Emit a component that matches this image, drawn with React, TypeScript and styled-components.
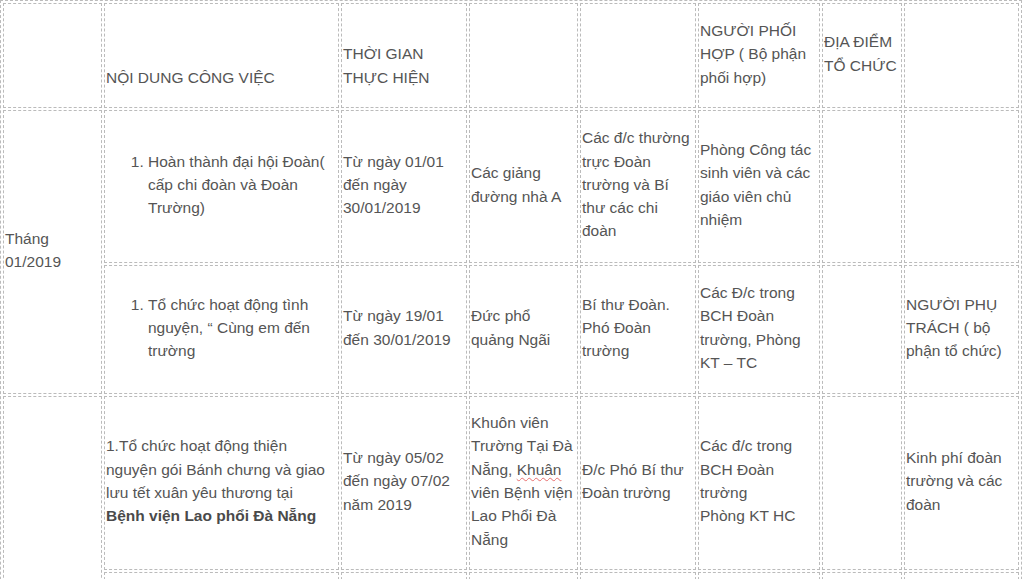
import React from "react";
import styled, { createGlobalStyle } from "styled-components";

const GlobalStyle = createGlobalStyle`
  body {
    margin: 0;
    background: #ffffff;
    font-family: "Liberation Sans", Arial, sans-serif;
    font-size: 15.5px;
    line-height: 23.3px;
    color: #555555;
  }
`;

const Table = styled.table`
  width: 1022px;
  table-layout: fixed;
  border-collapse: separate;
  border-spacing: 2px;
  border: 1px dashed #bbbbbb;
`;

const Row = styled.tr<{ h: number }>`
  height: ${({ h }) => h}px;
`;

const Cell = styled.td<{ valign?: "middle" | "bottom" }>`
  border: 1px dashed #bbbbbb;
  padding: 0 1px;
  vertical-align: ${({ valign }) => valign || "middle"};
  padding-bottom: ${({ valign }) => (valign === "bottom" ? "18px" : "4px")};
  word-wrap: break-word;
`;

const NumberedList = styled.ol`
  margin: 0;
  padding-left: 42px;
`;

const Strong = styled.strong`
  font-weight: 700;
  color: #4a4a4a;
`;

const Misspelled = styled.span`
  text-decoration: underline wavy #e8706f;
  text-decoration-thickness: 1px;
  text-underline-offset: 2px;
`;

const widths = [99, 235, 126, 109, 116, 122, 80, 115];

const App: React.FC = () => {
  return (
    <>
      <GlobalStyle />
      <Table>
        <colgroup>
          {widths.map((w, i) => (
            <col key={i} style={{ width: w }} />
          ))}
        </colgroup>
        <tbody>
          <Row h={105}>
            <Cell />
            <Cell valign="bottom">NỘI DUNG CÔNG VIỆC</Cell>
            <Cell valign="bottom">
              THỜI GIAN
              <br />
              THỰC HIỆN
            </Cell>
            <Cell />
            <Cell />
            <Cell valign="bottom">NGƯỜI PHỐI HỢP ( Bộ phận phối hợp)</Cell>
            <Cell>ĐỊA ĐIỂM TỔ CHỨC</Cell>
            <Cell />
          </Row>

          <Row h={153}>
            <Cell rowSpan={2}>Tháng 01/2019</Cell>
            <Cell>
              <NumberedList>
                <li>Hoàn thành đại hội Đoàn( cấp chi đoàn và Đoàn Trường)</li>
              </NumberedList>
            </Cell>
            <Cell>Từ ngày 01/01 đến ngày 30/01/2019</Cell>
            <Cell>Các giảng đường nhà A</Cell>
            <Cell>Các đ/c thường trực Đoàn trường và Bí thư các chi đoàn</Cell>
            <Cell>Phòng Công tác sinh viên và các giáo viên chủ nhiệm</Cell>
            <Cell />
            <Cell />
          </Row>

          <Row h={129}>
            <Cell>
              <NumberedList>
                <li>Tổ chức hoạt động tình nguyện, “ Cùng em đến trường</li>
              </NumberedList>
            </Cell>
            <Cell>Từ ngày 19/01 đến 30/01/2019</Cell>
            <Cell>Đức phổ quảng Ngãi</Cell>
            <Cell>Bí thư Đoàn. Phó Đoàn trường</Cell>
            <Cell>Các Đ/c trong BCH Đoàn trường, Phòng KT – TC</Cell>
            <Cell />
            <Cell>NGƯỜI PHỤ TRÁCH ( bộ phận tổ chức)</Cell>
          </Row>

          <Row h={174}>
            <Cell rowSpan={2} />
            <Cell>
              1.Tổ chức hoạt động thiện nguyện gói Bánh chưng và giao lưu tết
              xuân yêu thương tại
              <br />
              <Strong>Bệnh viện Lao phổi Đà Nẵng</Strong>
            </Cell>
            <Cell>Từ ngày 05/02 đến ngày 07/02 năm 2019</Cell>
            <Cell>
              Khuôn viên Trường Tại Đà Nẵng, <Misspelled>Khuân</Misspelled>{" "}
              viên Bệnh viện Lao Phổi Đà Nẵng
            </Cell>
            <Cell>Đ/c Phó Bí thư Đoàn trường</Cell>
            <Cell>
              Các đ/c trong BCH Đoàn trường
              <br />
              Phòng KT HC
            </Cell>
            <Cell />
            <Cell>Kinh phí đoàn trường và các đoàn</Cell>
          </Row>

          <Row h={120}>
            <Cell />
            <Cell />
            <Cell />
            <Cell />
            <Cell />
            <Cell />
            <Cell />
          </Row>
        </tbody>
      </Table>
    </>
  );
};

export default App;
